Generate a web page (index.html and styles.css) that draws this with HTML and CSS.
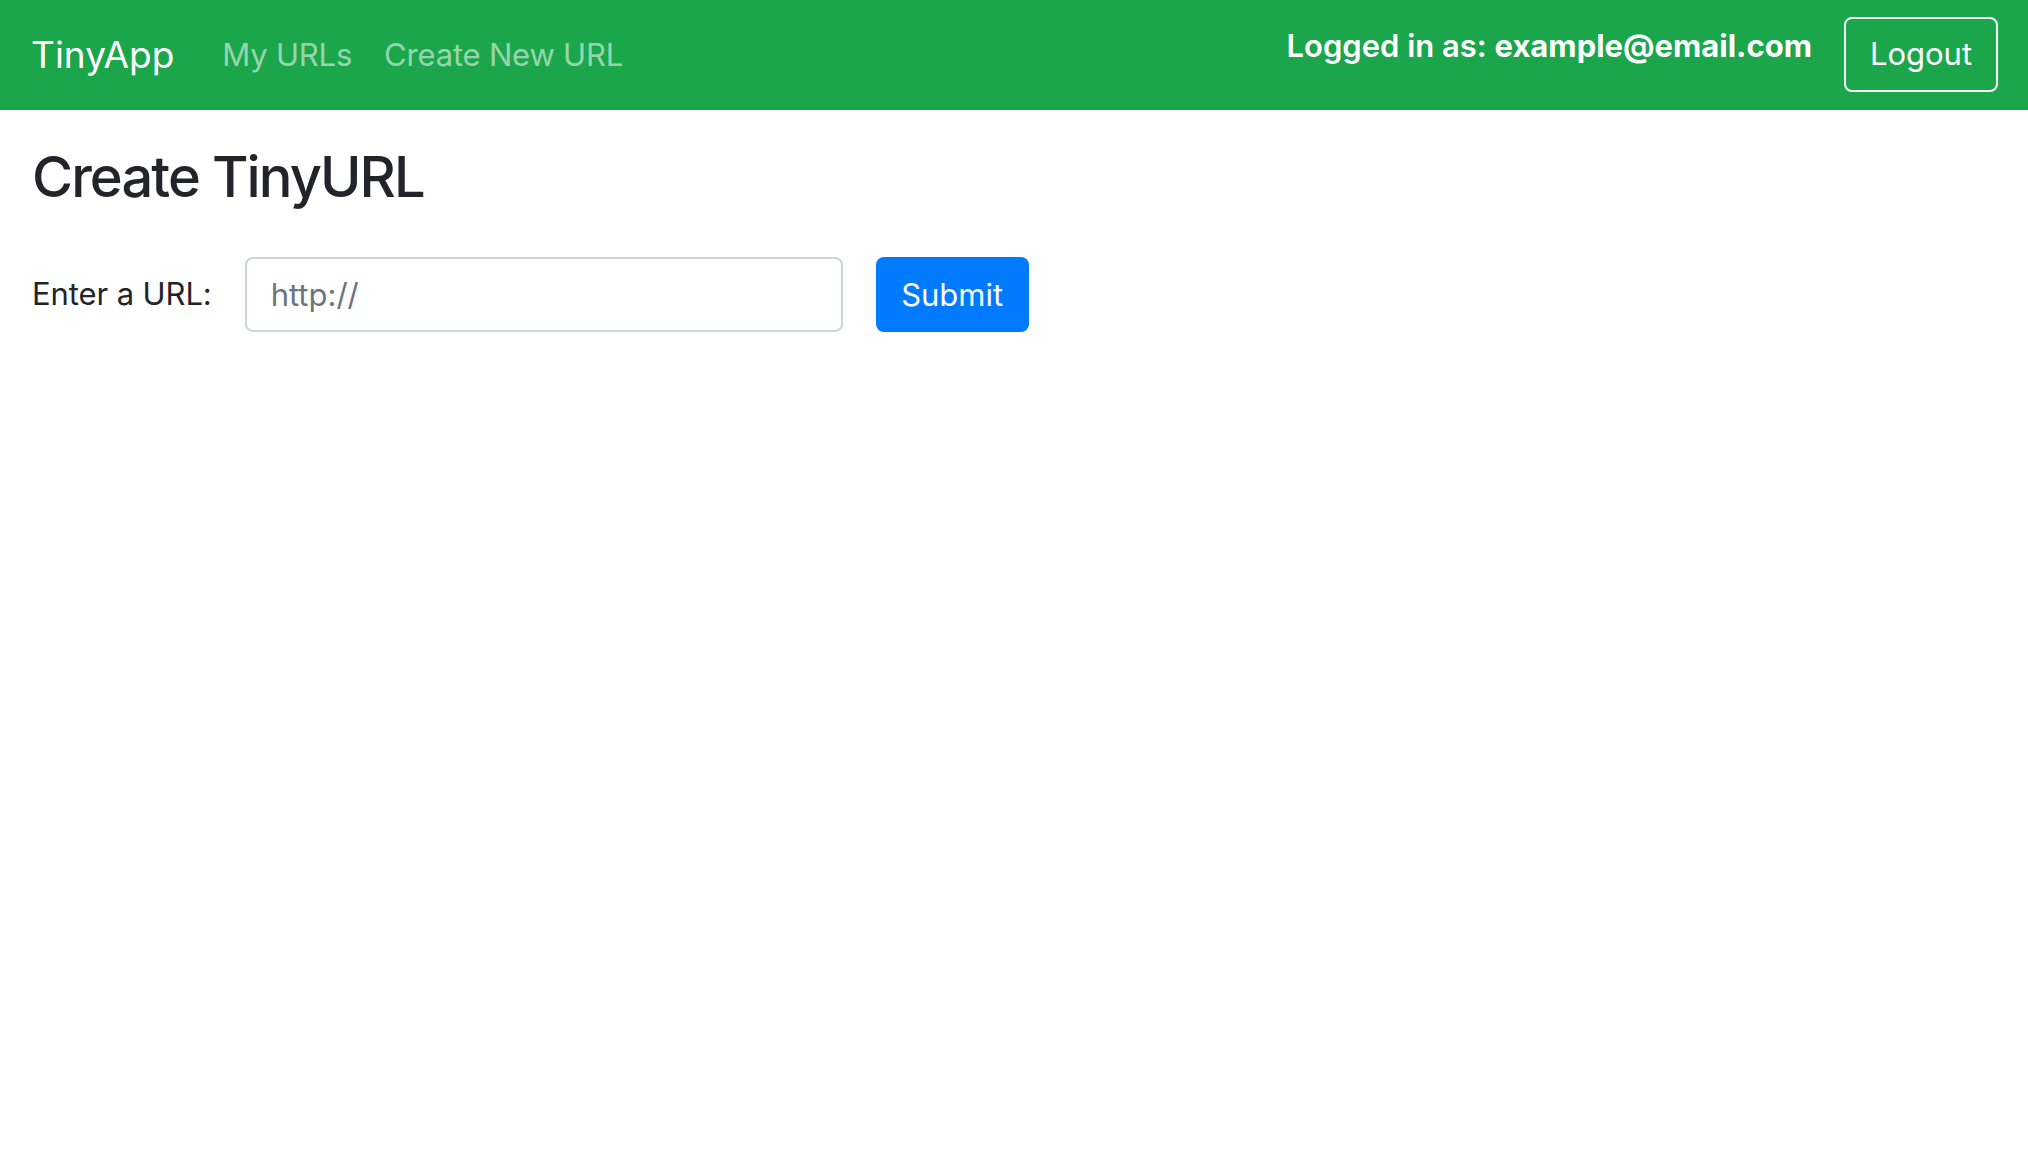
FILE: index.html
```html
<!DOCTYPE html>
<html lang="en">
<head>
<meta charset="utf-8">
<title>TinyApp</title>
<link rel="stylesheet" href="styles.css">
</head>
<body>
<nav class="navbar">
  <a class="brand" href="#">TinyApp</a>
  <div class="nav-links">
    <a class="nav-link" href="#">My URLs</a>
    <a class="nav-link" href="#">Create New URL</a>
  </div>
  <div class="nav-right">
    <span class="login-text">Logged in as: <b>example@email.com</b></span>
    <button class="btn-logout" type="button">Logout</button>
  </div>
</nav>
<main class="content">
  <h3 class="title">Create TinyURL</h3>
  <form class="url-form">
    <label class="url-label" for="longURL">Enter a URL:</label>
    <input class="url-input" id="longURL" type="text" placeholder="http://">
    <button class="btn-submit" type="submit">Submit</button>
  </form>
</main>
</body>
</html>
```
FILE: styles.css
```css
* { box-sizing: border-box; }
html, body {
  margin: 0;
  padding: 0;
  background: #fff;
}
body {
  font-family: Inter, "Noto Sans", "Liberation Sans", sans-serif;
  color: #212529;
  font-size: 31px;
  line-height: 1.5;
}
.navbar {
  display: flex;
  align-items: center;
  height: 110px;
  padding: 0 30px 0 31px;
  background: #1ba64c;
}
.brand {
  font-size: 37px;
  color: #fff;
  text-decoration: none;
  margin-right: 32px;
  margin-bottom: 1px;
  line-height: 1.5;
}
.nav-links {
  display: flex;
  flex: 1;
}
.nav-link {
  font-size: 31px;
  color: rgba(255, 255, 255, 0.55);
  text-decoration: none;
  padding: 0 16px;
  letter-spacing: -0.2px;
}
.nav-right {
  display: flex;
  align-items: center;
  gap: 32px;
}
.login-text {
  color: #fff;
  font-weight: 600;
  font-size: 31px;
  margin-bottom: 18px;
}
.login-text b { font-weight: 700; }
.btn-logout {
  font-family: inherit;
  font-size: 31px;
  color: #fff;
  background: transparent;
  border: 2px solid #f8f9fa;
  border-radius: 8px;
  width: 154px;
  height: 75px;
  padding: 0;
  margin-bottom: 2px;
  line-height: 1.5;
}
.content {
  padding: 0 30px;
}
.title {
  font-size: 56px;
  font-weight: 500;
  line-height: 1.2;
  letter-spacing: -0.034em;
  margin: 34px 0 46px 2px;
}
.url-form {
  display: flex;
  align-items: center;
}
.url-label {
  margin-left: 2px;
  margin-right: 33px;
  letter-spacing: -0.1px;
}
.url-input {
  width: 598px;
  height: 75px;
  border: 2px solid #ced4da;
  border-radius: 8px;
  padding: 0 24px;
  font-family: inherit;
  font-size: 31px;
  color: #495057;
  margin-right: 33px;
}
.url-input::placeholder { color: #6c757d; }
.btn-submit {
  width: 153px;
  height: 75px;
  border: 0;
  border-radius: 8px;
  background: #007bff;
  color: #fff;
  font-family: inherit;
  font-size: 31px;
  padding: 0;
}
```
